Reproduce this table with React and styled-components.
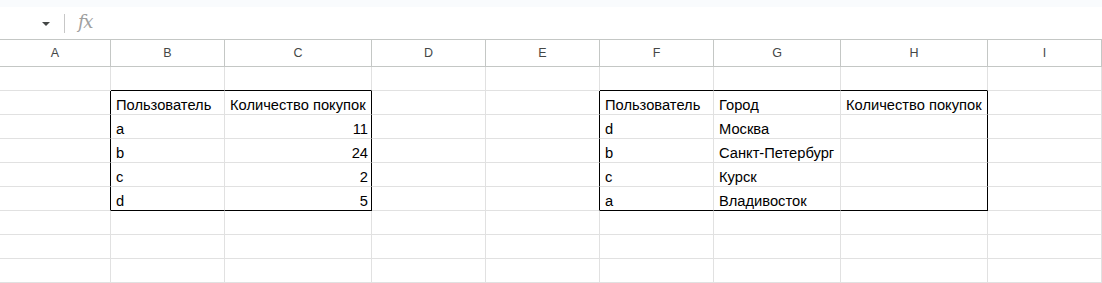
import React from "react";
import styled, { createGlobalStyle } from "styled-components";

const GlobalStyle = createGlobalStyle`
  html, body {
    margin: 0;
    padding: 0;
    background: #ffffff;
    overflow: hidden;
  }
  body {
    font-family: "Liberation Sans", Arial, sans-serif;
  }
`;

const COLUMNS = [
  { letter: "A", width: 111 },
  { letter: "B", width: 114 },
  { letter: "C", width: 147 },
  { letter: "D", width: 114 },
  { letter: "E", width: 114 },
  { letter: "F", width: 114 },
  { letter: "G", width: 127 },
  { letter: "H", width: 147 },
  { letter: "I", width: 114 },
];

const ROW_COUNT = 9;

// Bordered ranges: first/last row and column indices (0-based, body rows)
const TABLES = [
  { r0: 1, r1: 5, c0: 1, c1: 2 },
  { r0: 1, r1: 5, c0: 5, c1: 7 },
];

const CELLS = {
  "1:1": "Пользователь",
  "1:2": "Количество покупок",
  "2:1": "a",
  "3:1": "b",
  "4:1": "c",
  "5:1": "d",
  "2:2": 11,
  "3:2": 24,
  "4:2": 2,
  "5:2": 5,
  "1:5": "Пользователь",
  "1:6": "Город",
  "1:7": "Количество покупок",
  "2:5": "d",
  "3:5": "b",
  "4:5": "c",
  "5:5": "a",
  "2:6": "Москва",
  "3:6": "Санкт-Петербург",
  "4:6": "Курск",
  "5:6": "Владивосток",
};

const gridTemplate = COLUMNS.map((c) => `${c.width}px`).join(" ");

const Page = styled.div`
  width: 1102px;
  display: flex;
  flex-direction: column;
`;

const TopStrip = styled.div`
  height: 7px;
  background: #f9fbfd;
`;

const FormulaBar = styled.div`
  height: 32px;
  display: flex;
  align-items: center;
  padding-left: 42px;
  background: #ffffff;
`;

const DropArrow = styled.span`
  width: 0;
  height: 0;
  border-left: 4px solid transparent;
  border-right: 4px solid transparent;
  border-top: 4px solid #444746;
  margin-top: 1px;
`;

const Separator = styled.span`
  width: 1px;
  height: 19px;
  background: #c7c7c7;
  margin-left: 14px;
`;

const FxLabel = styled.span`
  margin-left: 13px;
  font-family: "DejaVu Serif", "Liberation Serif", serif;
  font-style: italic;
  font-size: 18px;
  letter-spacing: -1.5px;
  color: #a0a0a0;
  line-height: 1;
  margin-top: -2px;
`;

const HeaderRow = styled.div`
  display: grid;
  grid-template-columns: ${gridTemplate};
  border-top: 1px solid #c4c7c5;
  border-bottom: 1px solid #c4c7c5;
  background: #ffffff;
`;

const HeaderCell = styled.div`
  height: 26px;
  display: flex;
  align-items: center;
  justify-content: center;
  border-right: 1px solid #c4c7c5;
  font-size: 12.5px;
  color: #444746;
  box-sizing: border-box;
`;

const Sheet = styled.div`
  display: grid;
  grid-template-columns: ${gridTemplate};
  grid-auto-rows: 24px;
`;

const Cell = styled.div`
  box-sizing: border-box;
  display: flex;
  align-items: flex-end;
  justify-content: ${(p) => (p.$numeric ? "flex-end" : "flex-start")};
  padding: 0 3px 1px 5px;
  border-right: 1px solid ${(p) => (p.$darkRight ? "#000000" : "#e1e1e1")};
  border-bottom: 1px solid ${(p) => (p.$darkBottom ? "#000000" : "#e1e1e1")};
  font-size: 14.7px;
  line-height: 16px;
  color: #000000;
  white-space: nowrap;
  overflow: visible;
`;

function edgeFlags(r, c) {
  let right = false;
  let bottom = false;
  for (const t of TABLES) {
    const inRows = r >= t.r0 && r <= t.r1;
    const inCols = c >= t.c0 && c <= t.c1;
    if (inRows && (c === t.c1 || c + 1 === t.c0)) right = true;
    if (inCols && (r === t.r1 || r + 1 === t.r0)) bottom = true;
  }
  return { right, bottom };
}

export default function App() {
  const rows = [];
  for (let r = 0; r < ROW_COUNT; r++) {
    for (let c = 0; c < COLUMNS.length; c++) {
      const value = CELLS[`${r}:${c}`];
      const { right, bottom } = edgeFlags(r, c);
      rows.push(
        <Cell
          key={`${r}-${c}`}
          $numeric={typeof value === "number"}
          $darkRight={right}
          $darkBottom={bottom}
        >
          {value}
        </Cell>
      );
    }
  }

  return (
    <Page>
      <GlobalStyle />
      <TopStrip />
      <FormulaBar>
        <DropArrow />
        <Separator />
        <FxLabel>fx</FxLabel>
      </FormulaBar>
      <HeaderRow>
        {COLUMNS.map((col) => (
          <HeaderCell key={col.letter}>{col.letter}</HeaderCell>
        ))}
      </HeaderRow>
      <Sheet>{rows}</Sheet>
    </Page>
  );
}
